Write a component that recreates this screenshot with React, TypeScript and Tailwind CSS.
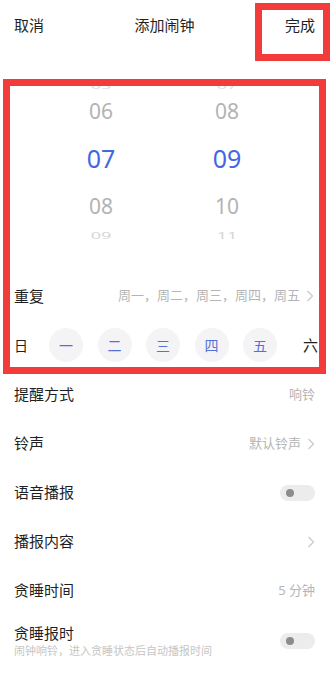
import React from 'react';

const font = { fontFamily: '"Noto Sans", "Noto Sans CJK SC", sans-serif' };

const Chevron = () => (
  <svg width="8" height="12" viewBox="0 0 8 12" className="ml-[6px]">
    <path d="M1.5 1 L6.5 6 L1.5 11" fill="none" stroke="#c8c8c8" strokeWidth="1.2" />
  </svg>
);

const Toggle = () => (
  <div className="w-[35px] h-[16px] rounded-full bg-[#ececec] flex items-center pl-[6px]">
    <div className="w-[8px] h-[8px] rounded-full bg-[#8c8c8c]" />
  </div>
);

interface WheelProps {
  values: string[];
}

const Wheel: React.FC<WheelProps> = ({ values }) => (
  <div className="flex flex-col items-center w-[80px] shrink-0">
    <div className="h-[28px] shrink-0 flex items-end text-[18px] leading-none text-[#dedede] scale-y-50 origin-bottom">{values[0]}</div>
    <div className="h-[42px] shrink-0 flex items-center text-[21px] leading-none text-[#b3b3b3]">{values[1]}</div>
    <div className="h-[52px] shrink-0 flex items-center text-[25px] leading-none text-[#4566e6]">{values[2]}</div>
    <div className="h-[44px] shrink-0 flex items-center text-[21px] leading-none text-[#b3b3b3]">{values[3]}</div>
    <div className="h-[24px] shrink-0 flex items-start text-[18px] leading-none text-[#d6d6d6] scale-y-50 origin-top pt-[6px]">{values[4]}</div>
  </div>
);

const days = ['一', '二', '三', '四', '五'];

const rows: { label: string; value?: string; chevron?: boolean; toggle?: boolean }[] = [
  { label: '提醒方式', value: '响铃' },
  { label: '铃声', value: '默认铃声', chevron: true },
  { label: '语音播报', toggle: true },
  { label: '播报内容', chevron: true },
  { label: '贪睡时间', value: '5 分钟' },
];

export default function App() {
  return (
    <div className="relative w-[334px] h-[680px] bg-white overflow-hidden text-[#1f1f1f]" style={font}>
      {/* header */}
      <div className="h-[50px] flex items-center justify-between pl-[14px] pr-[19px] text-[15px]">
        <span>取消</span>
        <span>添加闹钟</span>
        <span>完成</span>
      </div>

      {/* time picker */}
      <div className="mt-[12px] h-[184px] overflow-hidden flex items-start pl-[61px]">
        <Wheel values={['05', '06', '07', '08', '09']} />
        <div className="ml-[46px]">
          <Wheel values={['07', '08', '09', '10', '11']} />
        </div>
      </div>

      {/* repeat */}
      <div className="mt-[26px] h-[48px] flex items-center justify-between pl-[14px] pr-[20px]">
        <span className="text-[15px]">重复</span>
        <span className="flex items-center text-[13px] text-[#b5b5b5]">
          周一，周二，周三，周四，周五
          <Chevron />
        </span>
      </div>

      {/* weekdays */}
      <div className="h-[50px] flex items-center pl-[14px] pr-[16px]">
        <span className="w-[35px] text-[14px]">日</span>
        <div className="flex gap-[14.5px]">
          {days.map((d) => (
            <div
              key={d}
              className="w-[34px] h-[34px] rounded-full bg-[#f4f4f6] flex items-center justify-center text-[14px] text-[#5570d8]"
            >
              {d}
            </div>
          ))}
        </div>
        <span className="ml-auto text-[15px]">六</span>
      </div>

      {/* settings */}
      {rows.map((r) => (
        <div key={r.label} className="h-[49px] flex items-center justify-between pl-[14px] pr-[19px]">
          <span className="text-[15px]">{r.label}</span>
          <span className="flex items-center text-[13px] text-[#b5b5b5]">
            {r.value}
            {r.chevron && <Chevron />}
            {r.toggle && <Toggle />}
          </span>
        </div>
      ))}
      <div className="flex items-center justify-between pl-[14px] pr-[19px] pt-[8px]">
        <div className="flex flex-col">
          <span className="text-[15px] leading-[20px]">贪睡报时</span>
          <span className="text-[11px] leading-[16px] text-[#c6c6c6]">闹钟响铃，进入贪睡状态后自动播报时间</span>
        </div>
        <Toggle />
      </div>

      {/* annotation boxes */}
      <div className="absolute left-[255px] top-[3px] w-[75px] h-[58px] border-[7px] border-[#f23b3b]" />
      <div className="absolute left-[3px] top-[79px] w-[323px] h-[295px] border-[7px] border-[#f23b3b]" />
    </div>
  );
}
